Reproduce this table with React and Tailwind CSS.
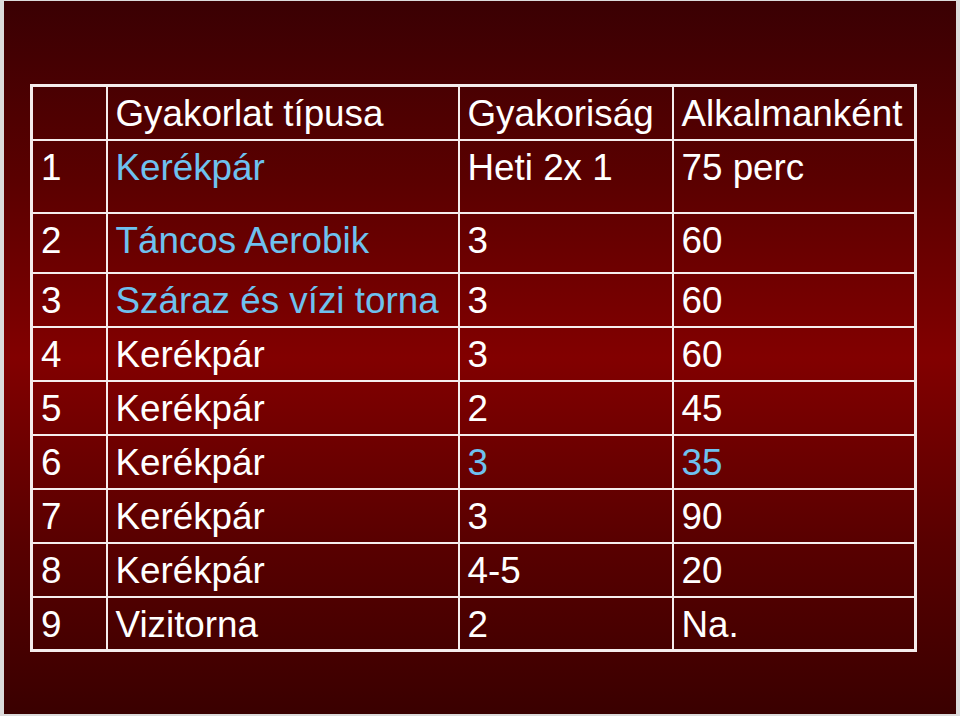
const BLUE = "text-[#6ec1ef]";

const rows = [
  { n: "", a: "Gyakorlat típusa", b: "Gyakoriság", c: "Alkalmanként", h: "h-[54px]" },
  { n: "1", a: "Kerékpár", b: "Heti 2x 1", c: "75 perc", h: "h-[73px]", blueA: true },
  { n: "2", a: "Táncos Aerobik", b: "3", c: "60", h: "h-[60px]", blueA: true },
  { n: "3", a: "Száraz és vízi torna", b: "3", c: "60", h: "h-[54px]", blueA: true },
  { n: "4", a: "Kerékpár", b: "3", c: "60", h: "h-[54px]" },
  { n: "5", a: "Kerékpár", b: "2", c: "45", h: "h-[54px]" },
  { n: "6", a: "Kerékpár", b: "3", c: "35", h: "h-[54px]", blueB: true, blueC: true },
  { n: "7", a: "Kerékpár", b: "3", c: "90", h: "h-[54px]" },
  { n: "8", a: "Kerékpár", b: "4-5", c: "20", h: "h-[54px]" },
  { n: "9", a: "Vizitorna", b: "2", c: "Na.", h: "h-[54px]" },
];

const cell = "border-2 border-[#f5ecec] align-top pl-[8px] pt-[6px] leading-[42px] whitespace-nowrap";

export default function App() {
  return (
    <div className="w-[960px] h-[716px] bg-[#dcdcdc] pl-1 pr-1 pt-px pb-[2px] flex">
      <div className="flex-1 pl-[26px] pt-[83px] bg-[linear-gradient(to_bottom,#3a0003_0%,#5a0000_25%,#820000_50%,#5a0000_75%,#3a0000_100%)] font-['Liberation_Sans',Arial,sans-serif] text-[36.8px] text-white">
        <table className="border-collapse border-[3px] border-[#f5ecec] table-fixed w-[884px]">
          <colgroup>
            <col className="w-[75px]" />
            <col className="w-[352px]" />
            <col className="w-[214px]" />
            <col className="w-[243px]" />
          </colgroup>
          <tbody>
            {rows.map((r, i) => (
              <tr key={i} className={r.h}>
                <td className={cell}>{r.n}</td>
                <td className={`${cell} ${r.blueA ? BLUE : ""}`}>{r.a}</td>
                <td className={`${cell} ${r.blueB ? BLUE : ""}`}>{r.b}</td>
                <td className={`${cell} ${r.blueC ? BLUE : ""}`}>{r.c}</td>
              </tr>
            ))}
          </tbody>
        </table>
      </div>
    </div>
  );
}
